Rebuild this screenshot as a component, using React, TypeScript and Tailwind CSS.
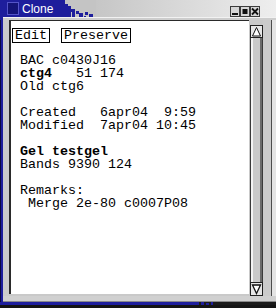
import React from "react";

const BLUE = "#1e1e9c";

// blue pixel clusters where the title bar fades into grey
const titleDither: [number, number, number, number][] = [
  [0, 0, 3, 17],
  [3, 4, 3, 13],
  [6, 6, 3, 11],
  [9, 9, 4, 3],
  [10, 12, 3, 5],
  [14, 11, 3, 3],
  [17, 13, 4, 4],
  [23, 12, 3, 3],
  [27, 14, 4, 3],
  [22, 16, 2, 1],
];

const bottomDither: [number, number, number, number][] = [
  [0, 0, 4, 3],
  [6, 0, 3, 3],
  [11, 1, 3, 2],
  [16, 0, 2, 3],
];

const lines: { text: string; bold?: string }[] = [
  { text: "BAC c0430J16" },
  { bold: "ctg4", text: "   51 174" },
  { text: "Old ctg6" },
  { text: "" },
  { text: "Created   6apr04  9:59" },
  { text: "Modified  7apr04 10:45" },
  { text: "" },
  { bold: "Gel testgel", text: "" },
  { text: "Bands 9390 124" },
  { text: "" },
  { text: "Remarks:" },
  { text: " Merge 2e-80 c0007P08" },
];

function TitleButton({ kind }: { kind: "min" | "max" | "close" }) {
  return (
    <div className="w-[10px] h-[11px] border border-[#3c3c3c] bg-[#d6d6d6] flex items-center justify-center">
      <svg width="8" height="9" viewBox="0 0 8 9">
        {kind === "min" && <rect x="1" y="6" width="6" height="2" fill="#111" />}
        {kind === "max" && <rect x="1.5" y="2" width="5" height="5" fill="#111" />}
        {kind === "close" && (
          <path d="M1 1.5 L7 7.5 M7 1.5 L1 7.5" stroke="#111" strokeWidth="1.8" />
        )}
      </svg>
    </div>
  );
}

function Arrow({ up }: { up?: boolean }) {
  return (
    <div className="h-full w-full border border-[#202020] bg-[#e6e6e6] flex items-center justify-center">
      <svg width="11" height="11" viewBox="0 0 11 11">
        {up ? (
          <polygon points="1.5,10 9.5,10 5.5,1.5" fill="#fff" stroke="#111" strokeWidth="1" />
        ) : (
          <polygon points="1.5,1 9.5,1 5.5,9.5" fill="#fff" stroke="#111" strokeWidth="1.3" />
        )}
      </svg>
    </div>
  );
}

export default function App() {
  return (
    <div className="w-[276px] h-[308px] overflow-hidden flex flex-col bg-[#c9c9c9] font-['Liberation_Sans',sans-serif]">
      {/* title bar */}
      <div className="h-[17px] flex shrink-0">
        <div className="w-[62px] flex items-center" style={{ background: BLUE }}>
          <div className="ml-[7px] w-[12px] h-[13px] border border-[#5454c8] bg-[#141478]" />
          <span className="ml-[3px] text-[12px] leading-none text-white">Clone</span>
        </div>
        <svg width="34" height="17" className="shrink-0 bg-[#c4c4c4]">
          {titleDither.map(([x, y, w, h], i) => (
            <rect key={i} x={x} y={y} width={w} height={h} fill={BLUE} />
          ))}
        </svg>
        <div className="flex-1 flex items-end justify-end pr-[16px] bg-gradient-to-r from-[#c6c6c6] to-[#eeeeee]">
          <TitleButton kind="min" />
          <TitleButton kind="max" />
          <TitleButton kind="close" />
        </div>
      </div>

      {/* band under title */}
      <div className="h-[3px] flex shrink-0">
        <div className="w-[3px]" style={{ background: BLUE }} />
        <div className="flex-1 border-t border-[#f2f2f2] bg-[#cdcdcd]" />
      </div>

      {/* body */}
      <div className="h-[276px] flex shrink-0">
        <div className="w-[3px] border-l border-[#0a0a40]" style={{ background: BLUE }} />
        <div className="w-[6px] bg-[#cbcbcb]" />
        <div className="w-[240px] h-[274px] self-start border-l-2 border-t border-[#2a2a2a] bg-white font-['Liberation_Mono',monospace] text-[13.33px] leading-[13px] text-black">
          <div className="flex gap-[11px] mt-[7px] ml-[1px]">
            <span className="border border-black px-[2px]">Edit</span>
            <span className="border border-black px-[2px]">Preserve</span>
          </div>
          <div className="mt-[11px] pl-[9px] whitespace-pre">
            {lines.map((l, i) => (
              <div key={i} className="h-[13px]">
                {l.bold && <b>{l.bold}</b>}
                {l.text}
              </div>
            ))}
          </div>
        </div>
        <div className="w-[1px]" />
        <div className="w-[13px] pt-[5px] flex flex-col">
          <div className="h-[13px]">
            <Arrow up />
          </div>
          <div className="flex-1 flex border-x border-[#3a3a3a]">
            <div className="w-[2px] bg-[#f4f4f4]" />
            <div className="flex-1 bg-[#cacaca]" />
            <div className="w-[2px] bg-[#6a6a6a]" />
          </div>
          <div className="h-[14px]">
            <Arrow />
          </div>
        </div>
        <div className="w-[8px] bg-[#cbcbcb]" />
        <div className="w-[1px] bg-[#4c4c4c]" />
        <div className="flex-1 bg-[#e4e4e4]" />
      </div>

      {/* bottom edge */}
      <div className="h-[6px] flex shrink-0">
        <div className="w-[3px] border-l border-[#0a0a40]" style={{ background: BLUE }} />
        <div className="flex-1 border-b border-[#8a8a8a] bg-[#d0d0d0]" />
      </div>
      <div className="h-[3px] flex shrink-0 bg-[#1a1a1a]">
        <div className="w-[195px]" style={{ background: BLUE }} />
        <svg width="20" height="3" className="shrink-0">
          {bottomDither.map(([x, y, w, h], i) => (
            <rect key={i} x={x} y={y} width={w} height={h} fill={BLUE} />
          ))}
        </svg>
      </div>
      <div className="h-[3px] shrink-0 bg-[#141414]" />
    </div>
  );
}
